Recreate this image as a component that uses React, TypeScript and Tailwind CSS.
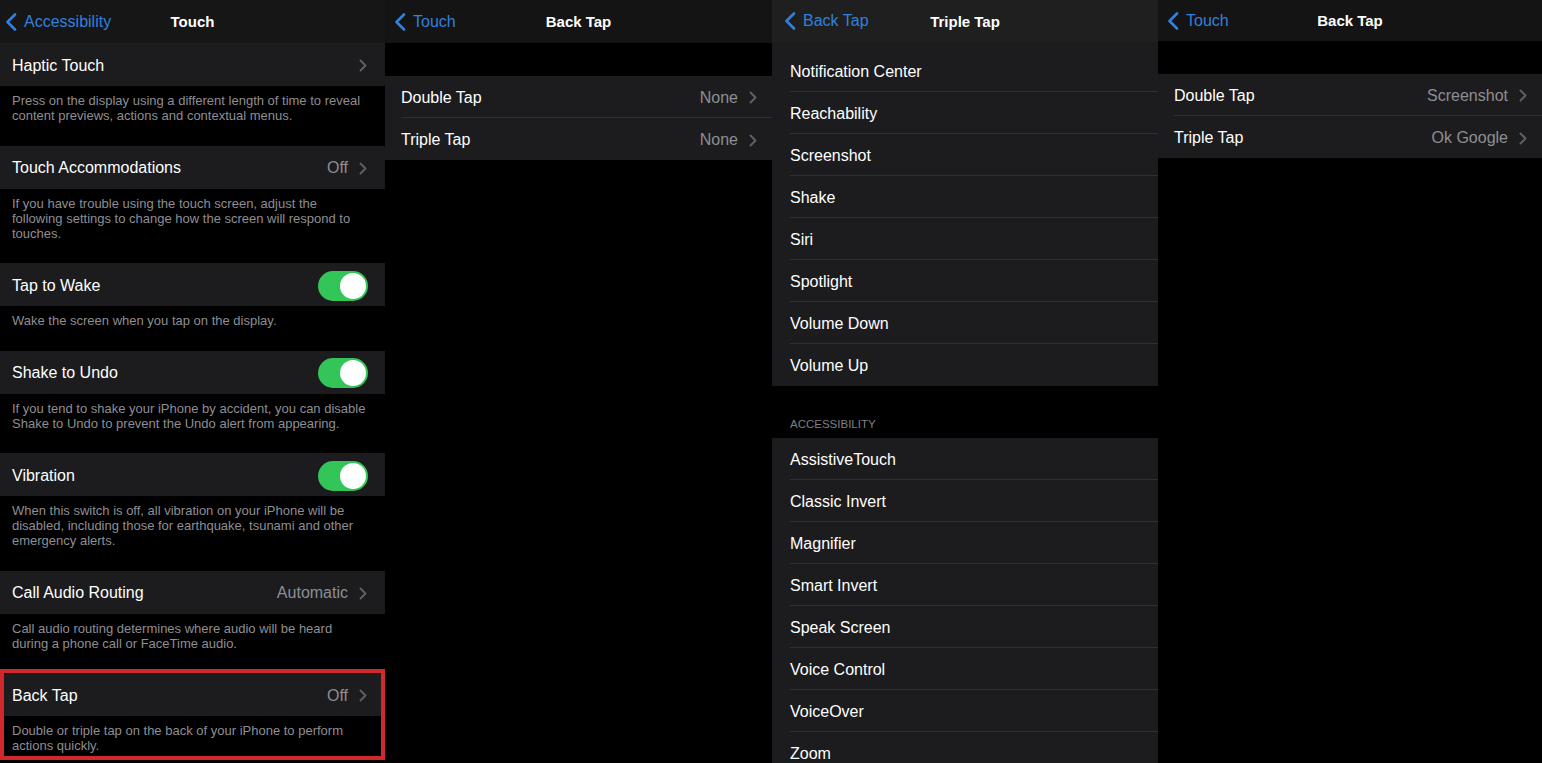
import React from "react";

const BLUE = "#3380dc";

function Chevron() {
  return (
    <svg width="8" height="13" viewBox="0 0 8 13" className="shrink-0">
      <polyline
        points="1.5,1.5 6.5,6.5 1.5,11.5"
        fill="none"
        stroke="#5f5f63"
        strokeWidth="2"
        strokeLinecap="round"
        strokeLinejoin="round"
      />
    </svg>
  );
}

function BackChevron() {
  return (
    <svg width="12" height="18" viewBox="0 0 12 18" className="shrink-0">
      <polyline
        points="10,1.5 2.5,9 10,16.5"
        fill="none"
        stroke={BLUE}
        strokeWidth="2.6"
        strokeLinecap="round"
        strokeLinejoin="round"
      />
    </svg>
  );
}

function Toggle() {
  return (
    <div className="w-[50px] h-[30px] rounded-full bg-[#33c558] flex items-center justify-end pr-[2px] shrink-0">
      <div className="w-[26px] h-[26px] rounded-full bg-white" />
    </div>
  );
}

function NavBar({
  back,
  title,
  bg,
  h,
  pl,
}: {
  back: string;
  title: string;
  bg: string;
  h: string;
  pl: string;
}) {
  return (
    <div className={`grid grid-cols-[1fr_auto_1fr] items-center shrink-0 ${bg} ${h}`}>
      <div className={`flex items-center gap-[7px] ${pl}`}>
        <BackChevron />
        <span className="text-[16px] text-[#3380dc] leading-none">{back}</span>
      </div>
      <div className="text-[15px] font-bold text-white leading-none">{title}</div>
      <div />
    </div>
  );
}

function Footer({ lines, cls }: { lines: string[]; cls: string }) {
  return (
    <div className={`shrink-0 text-[13px] leading-[15px] text-[#8e8e93] whitespace-nowrap ${cls}`}>
      {lines.map((l, i) => (
        <div key={i}>{l}</div>
      ))}
    </div>
  );
}

function P1Row({
  label,
  value,
  toggle,
  cls = "pl-[12px] pr-[18px]",
}: {
  label: string;
  value?: string;
  toggle?: boolean;
  cls?: string;
}) {
  return (
    <div className={`shrink-0 h-[43px] pt-[2px] bg-[#1c1c1e] flex items-center justify-between ${cls}`}>
      <span className="text-[16px] text-white">{label}</span>
      {toggle ? (
        <div className="-mr-[1px]">
          <Toggle />
        </div>
      ) : (
        <div className="flex items-center gap-[11px]">
          {value && <span className="text-[16px] text-[#8e8e93]">{value}</span>}
          <Chevron />
        </div>
      )}
    </div>
  );
}

function ListRow({
  label,
  value,
  sep,
  pl,
  pr,
  h = "h-[42px]",
  chevron,
}: {
  label: string;
  value?: string;
  sep?: boolean;
  pl: string;
  pr: string;
  h?: string;
  chevron?: boolean;
}) {
  return (
    <div className={`shrink-0 bg-[#1c1c1e] flex ${pl} ${h}`}>
      <div
        className={`flex-1 flex items-center justify-between pt-[2px] ${pr} ${
          sep ? "border-b border-[#303033]" : ""
        }`}
      >
        <span className="text-[16px] text-white">{label}</span>
        {chevron && (
          <div className="flex items-center gap-[11px]">
            {value && <span className="text-[16px] text-[#8e8e93]">{value}</span>}
            <Chevron />
          </div>
        )}
      </div>
    </div>
  );
}

function Panel1() {
  const fp = "pl-[12px] pt-[7px] pb-[22.5px]";
  return (
    <div className="w-[385px] shrink-0 flex flex-col bg-black overflow-hidden">
      <NavBar back="Accessibility" title="Touch" bg="bg-[#161616]" h="h-[43px]" pl="pl-[5px]" />
      <P1Row label="Haptic Touch" />
      <Footer
        cls={fp}
        lines={[
          "Press on the display using a different length of time to reveal",
          "content previews, actions and contextual menus.",
        ]}
      />
      <P1Row label="Touch Accommodations" value="Off" />
      <Footer
        cls={fp}
        lines={[
          "If you have trouble using the touch screen, adjust the",
          "following settings to change how the screen will respond to",
          "touches.",
        ]}
      />
      <P1Row label="Tap to Wake" toggle />
      <Footer cls={fp} lines={["Wake the screen when you tap on the display."]} />
      <P1Row label="Shake to Undo" toggle />
      <Footer
        cls={fp}
        lines={[
          "If you tend to shake your iPhone by accident, you can disable",
          "Shake to Undo to prevent the Undo alert from appearing.",
        ]}
      />
      <P1Row label="Vibration" toggle />
      <Footer
        cls={fp}
        lines={[
          "When this switch is off, all vibration on your iPhone will be",
          "disabled, including those for earthquake, tsunami and other",
          "emergency alerts.",
        ]}
      />
      <P1Row label="Call Audio Routing" value="Automatic" />
      <Footer
        cls="pl-[12px] pt-[7px] pb-[18.5px]"
        lines={[
          "Call audio routing determines where audio will be heard",
          "during a phone call or FaceTime audio.",
        ]}
      />
      <div className="border-[4px] border-[#d0282d] shrink-0">
        <P1Row label="Back Tap" value="Off" cls="pl-[8px] pr-[14px]" />
        <Footer
          cls="pl-[8px] pt-[7px] pb-[3px]"
          lines={[
            "Double or triple tap on the back of your iPhone to perform",
            "actions quickly.",
          ]}
        />
      </div>
    </div>
  );
}

function Panel2() {
  return (
    <div className="w-[387px] shrink-0 flex flex-col bg-black">
      <NavBar back="Touch" title="Back Tap" bg="bg-[#141414]" h="h-[43px]" pl="pl-[9px]" />
      <div className="h-[33px] shrink-0" />
      <ListRow label="Double Tap" value="None" sep chevron pl="pl-[16px]" pr="pr-[15px]" />
      <ListRow label="Triple Tap" value="None" chevron pl="pl-[16px]" pr="pr-[15px]" />
    </div>
  );
}

function Panel3() {
  const g1 = [
    "Notification Center",
    "Reachability",
    "Screenshot",
    "Shake",
    "Siri",
    "Spotlight",
    "Volume Down",
    "Volume Up",
  ];
  const g2 = [
    "AssistiveTouch",
    "Classic Invert",
    "Magnifier",
    "Smart Invert",
    "Speak Screen",
    "Voice Control",
    "VoiceOver",
    "Zoom",
  ];
  return (
    <div className="w-[386px] shrink-0 flex flex-col bg-black overflow-hidden">
      <NavBar back="Back Tap" title="Triple Tap" bg="bg-[#1f1f20]" h="h-[42px]" pl="pl-[12px]" />
      <div className="bg-[#1c1c1e] pt-[8px] shrink-0">
        {g1.map((l, i) => (
          <ListRow key={l} label={l} sep={i < g1.length - 1} pl="pl-[18px]" pr="pr-[15px]" />
        ))}
      </div>
      <div className="h-[52px] shrink-0 flex items-end pl-[18px] pb-[8px]">
        <span className="text-[11.5px] leading-none text-[#7f7f84] uppercase">Accessibility</span>
      </div>
      <div className="bg-[#1c1c1e] shrink-0">
        {g2.map((l, i) => (
          <ListRow key={l} label={l} sep={i < g2.length - 1} pl="pl-[18px]" pr="pr-[15px]" />
        ))}
      </div>
    </div>
  );
}

function Panel4() {
  return (
    <div className="w-[384px] shrink-0 flex flex-col bg-black">
      <NavBar back="Touch" title="Back Tap" bg="bg-[#141414]" h="h-[41px]" pl="pl-[9px]" />
      <div className="h-[33px] shrink-0" />
      <ListRow label="Double Tap" value="Screenshot" sep chevron pl="pl-[16px]" pr="pr-[15px]" />
      <ListRow label="Triple Tap" value="Ok Google" chevron pl="pl-[16px]" pr="pr-[15px]" />
    </div>
  );
}

export default function App() {
  return (
    <div className="w-[1542px] h-[763px] overflow-hidden bg-black flex font-['Liberation_Sans',Arial,sans-serif]">
      <Panel1 />
      <Panel2 />
      <Panel3 />
      <Panel4 />
    </div>
  );
}
